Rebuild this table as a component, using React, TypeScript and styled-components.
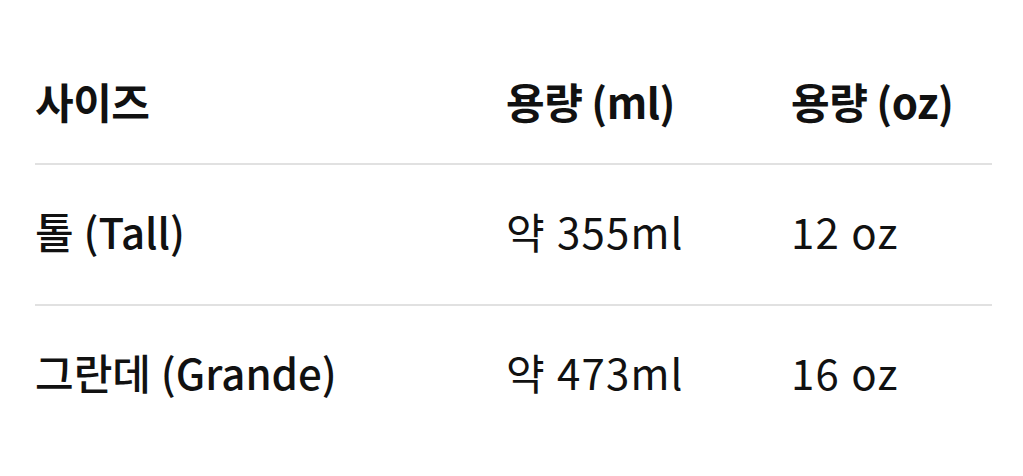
import React from 'react'
import styled, { createGlobalStyle } from 'styled-components'

const GlobalStyle = createGlobalStyle`
    html, body {
        margin     : 0;
        padding    : 0;
        background : #ffffff;
    }
    body {
        font-family : "Noto Sans CJK KR", "Noto Sans", sans-serif;
        color       : #111111;
    }
`

const rows = [
    { size: '톨 (Tall)', ml: '약 355ml', oz: '12 oz' },
    { size: '그란데 (Grande)', ml: '약 473ml', oz: '16 oz' },
]

const App = () => {
    return (
        <>
            <GlobalStyle />
            <Page>
                <SizeTable>
                    <thead>
                        <tr>
                            <HeadCell>사이즈</HeadCell>
                            <HeadCell>용량 (ml)</HeadCell>
                            <HeadCell>용량 (oz)</HeadCell>
                        </tr>
                    </thead>
                    <tbody>
                        {rows.map((row, i) => (
                            <BodyRow key={i} $last={i === rows.length - 1}>
                                <Cell $label>{row.size}</Cell>
                                <Cell>{row.ml}</Cell>
                                <Cell>{row.oz}</Cell>
                            </BodyRow>
                        ))}
                    </tbody>
                </SizeTable>
            </Page>
        </>
    )
}

export default App

const Page = styled.div`
    padding : 45px 31px 0 35px;
`

const SizeTable = styled.table`
    width           : 957px;
    border-collapse : collapse;
    table-layout    : fixed;
    font-size       : 42px;
    line-height     : 60px;

    th:nth-child(1),
    td:nth-child(1) {
        width : 471px;
    }
    th:nth-child(2),
    td:nth-child(2) {
        width : 285px;
    }
`

const HeadCell = styled.th`
    text-align     : left;
    font-weight    : 700;
    padding        : 26px 0 32px;
    border-bottom  : 2px solid #e1e1e1;
    letter-spacing : -0.5px;
    white-space    : nowrap;
`

const BodyRow = styled.tr<{ $last?: boolean }>`
    td {
        border-bottom : ${p => (p.$last ? 'none' : '2px solid #e1e1e1')};
    }
`

const Cell = styled.td<{ $label?: boolean }>`
    padding        : 36px 0 43px;
    font-weight    : ${p => (p.$label ? 500 : 400)};
    letter-spacing : ${p => (p.$label ? '0' : '1.2px')};
    word-spacing   : 0.5px;
    white-space    : nowrap;
`
